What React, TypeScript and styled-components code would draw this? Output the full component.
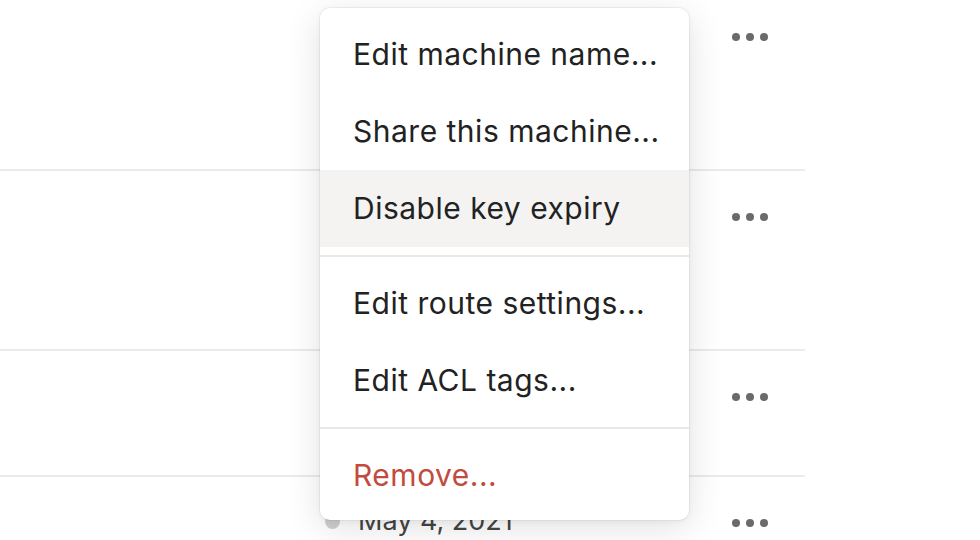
import React from "react";
import styled, { createGlobalStyle } from "styled-components";

const GlobalStyle = createGlobalStyle`
  html, body {
    margin: 0;
    padding: 0;
    background: #ffffff;
    overflow: hidden;
  }
  body {
    font-family: Inter, "Noto Sans", "Liberation Sans", sans-serif;
    color: #222222;
  }
`;

type Row = { height: number; date?: string };

const rows: Row[] = [
  { height: 180 },
  { height: 180 },
  { height: 126 },
  { height: 180, date: "May 4, 2021" },
];

type MenuEntry = { label: string; danger?: boolean; active?: boolean } | "divider";

const menu: MenuEntry[] = [
  { label: "Edit machine name..." },
  { label: "Share this machine..." },
  { label: "Disable key expiry", active: true },
  "divider",
  { label: "Edit route settings..." },
  { label: "Edit ACL tags..." },
  "divider",
  { label: "Remove...", danger: true },
];

export default function App() {
  return (
    <>
      <GlobalStyle />
      <Page>
        <Table>
          {rows.map((row, i) => (
            <TableRow key={i} height={row.height}>
              <StatusCell>
                {row.date && (
                  <LastSeen>
                    <StatusDot />
                    <DateText>{row.date}</DateText>
                  </LastSeen>
                )}
              </StatusCell>
              <ActionCell>
                <MoreButton aria-label="More">
                  <Dot />
                  <Dot />
                  <Dot />
                </MoreButton>
              </ActionCell>
            </TableRow>
          ))}
        </Table>

        <Menu role="menu">
          {menu.map((entry, i) =>
            entry === "divider" ? (
              <Divider key={i} />
            ) : (
              <MenuItem key={i} danger={entry.danger} active={entry.active}>
                {entry.label}
              </MenuItem>
            )
          )}
        </Menu>
      </Page>
    </>
  );
}

const Page = styled.div`
  position: relative;
  width: 980px;
  height: 540px;
  overflow: hidden;
`;

const Table = styled.div`
  display: flex;
  flex-direction: column;
  width: 805px;
  margin-top: -11px;
`;

const TableRow = styled.div<{ height: number }>`
  display: grid;
  grid-template-columns: 1fr 72px;
  height: ${(p) => p.height}px;
  border-top: 2px solid #ebebeb;
  box-sizing: border-box;
`;

const StatusCell = styled.div`
  display: flex;
  align-items: flex-start;
  padding-left: 325px;
  padding-top: 26px;
`;

const LastSeen = styled.div`
  display: flex;
  align-items: center;
  gap: 18px;
`;

const StatusDot = styled.span`
  width: 15px;
  height: 15px;
  border-radius: 50%;
  background: #cfcfcf;
`;

const DateText = styled.span`
  font-size: 27px;
  line-height: 36px;
  white-space: nowrap;
  color: #444444;
`;

const ActionCell = styled.div`
  display: flex;
  justify-content: flex-start;
  align-items: flex-start;
  padding-top: 42px;
`;

const MoreButton = styled.div`
  display: flex;
  gap: 6px;
  margin-left: -1px;
`;

const Dot = styled.span`
  width: 8px;
  height: 8px;
  border-radius: 50%;
  background: #6b6b6b;
`;

const Menu = styled.div`
  position: absolute;
  left: 320px;
  top: 8px;
  width: 369px;
  box-sizing: border-box;
  padding: 8px 0 6px;
  background: #ffffff;
  border-radius: 10px;
  box-shadow: 0 0 0 1px rgba(0, 0, 0, 0.045), 0 8px 36px rgba(0, 0, 0, 0.12),
    0 2px 6px rgba(0, 0, 0, 0.04);
  display: flex;
  flex-direction: column;
`;

const MenuItem = styled.div<{ danger?: boolean; active?: boolean }>`
  display: flex;
  align-items: center;
  height: 77px;
  box-sizing: border-box;
  padding: 0 20px 2px 33px;
  font-size: 30px;
  letter-spacing: 0.5px;
  white-space: nowrap;
  color: ${(p) => (p.danger ? "#c24b3d" : "#222222")};
  background: ${(p) => (p.active ? "#f4f3f2" : "transparent")};
  cursor: default;
`;

const Divider = styled.div`
  height: 2px;
  margin: 8px 0;
  background: #e9e9e9;
`;
